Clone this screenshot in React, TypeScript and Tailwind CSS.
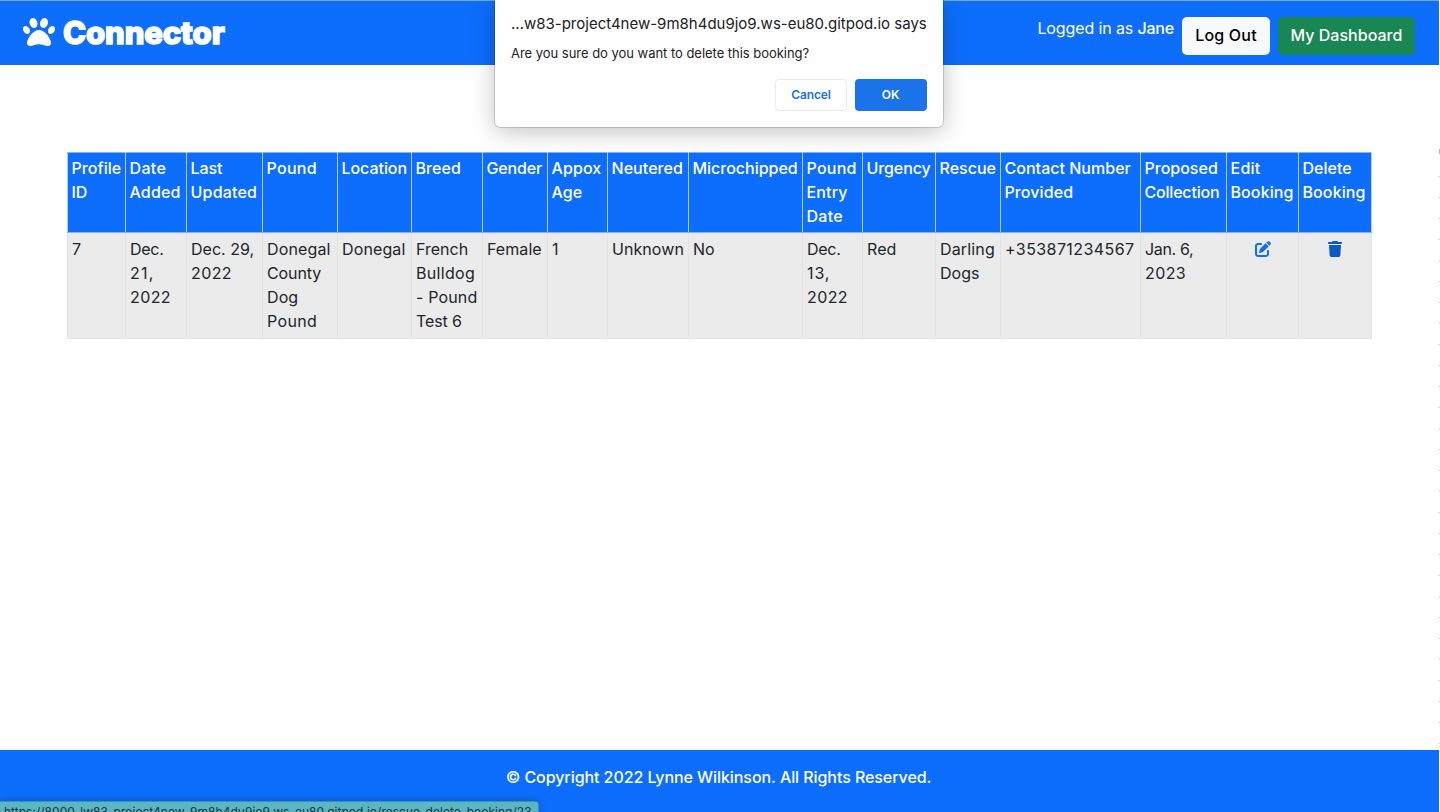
import { FaPaw, FaPenToSquare, FaTrash } from 'react-icons/fa6';

type Line = [text: string, tracking: string];
type Column = { width: string; head: Line[]; body: Line[]; icon?: 'edit' | 'delete' };

const columns: Column[] = [
  { width: 'w-[58px]', head: [['Profile', 'tracking-[0.05px]'], ['ID', '']], body: [['7', '']] },
  { width: 'w-[61px]', head: [['Date', 'tracking-[0.36px]'], ['Added', 'tracking-[0.15px]']], body: [['Dec.', 'tracking-[-0.29px]'], ['21,', 'tracking-[1.2px]'], ['2022', 'tracking-[0.42px]']] },
  { width: 'w-[76px]', head: [['Last', 'tracking-[-0.1px]'], ['Updated', 'tracking-[0.2px]']], body: [['Dec. 29,', ''], ['2022', 'tracking-[0.42px]']] },
  { width: 'w-[75px]', head: [['Pound', 'tracking-[0.3px]']], body: [['Donegal', 'tracking-[0.15px]'], ['County', 'tracking-[-0.1px]'], ['Dog', 'tracking-[0.1px]'], ['Pound', 'tracking-[0.35px]']] },
  { width: 'w-[74px]', head: [['Location', 'tracking-[-0.05px]']], body: [['Donegal', 'tracking-[0.12px]']] },
  { width: 'w-[71px]', head: [['Breed', 'tracking-[0.1px]']], body: [['French', ''], ['Bulldog', 'tracking-[0.32px]'], ['- Pound', 'tracking-[0.15px]'], ['Test 6', 'tracking-[-0.1px]']] },
  { width: 'w-[65px]', head: [['Gender', 'tracking-[-0.15px]']], body: [['Female', 'tracking-[0.06px]']] },
  { width: 'w-[60px]', head: [['Appox', 'tracking-[0.1px]'], ['Age', 'tracking-[0.1px]']], body: [['1', '']] },
  { width: 'w-[81px]', head: [['Neutered', 'tracking-[0.06px]']], body: [['Unknown', 'tracking-[0.07px]']] },
  { width: 'w-[114px]', head: [['Microchipped', 'tracking-[-0.02px]']], body: [['No', '']] },
  { width: 'w-[60px]', head: [['Pound', 'tracking-[0.25px]'], ['Entry', 'tracking-[0.15px]'], ['Date', 'tracking-[0.3px]']], body: [['Dec.', 'tracking-[-0.29px]'], ['13,', 'tracking-[0.9px]'], ['2022', 'tracking-[0.42px]']] },
  { width: 'w-[73px]', head: [['Urgency', 'tracking-[-0.1px]']], body: [['Red', 'tracking-[0.1px]']] },
  { width: 'w-[65px]', head: [['Rescue', '']], body: [['Darling', 'tracking-[0.15px]'], ['Dogs', '']] },
  { width: 'w-[140px]', head: [['Contact Number', 'tracking-[0.02px]'], ['Provided', 'tracking-[0.1px]']], body: [['+353871234567', 'tracking-[0.42px]']] },
  { width: 'w-[86px]', head: [['Proposed', ''], ['Collection', 'tracking-[-0.2px]']], body: [['Jan. 6,', 'tracking-[-0.33px]'], ['2023', 'tracking-[0.42px]']] },
  { width: 'w-[72px]', head: [['Edit', 'tracking-[0.24px]'], ['Booking', 'tracking-[0.1px]']], body: [], icon: 'edit' },
  { width: 'w-[73px]', head: [['Delete', 'tracking-[0.02px]'], ['Booking', 'tracking-[0.1px]']], body: [], icon: 'delete' },
];

function Lines({ lines }: { lines: Line[] }) {
  return (
    <>
      {lines.map(([text, tracking]) => (
        <span key={text} className={`block whitespace-nowrap ${tracking}`}>{text}</span>
      ))}
    </>
  );
}

function Dialog() {
  return (
    <div role="dialog" className="absolute left-[495px] top-0 flex h-[127px] w-[448px] flex-col rounded-b-[5px] bg-white px-4 pb-4 text-[#202124] shadow-[0_0_0_1px_rgba(0,0,0,0.15),0_4px_24px_rgba(0,0,0,0.25)]">
      <h1 className="mt-[13px] whitespace-nowrap text-[15px] leading-[21px]">…w83-project4new-9m8h4du9jo9.ws-eu80.gitpod.io says</h1>
      <p className="mt-[9px] whitespace-nowrap text-[13px] leading-5 tracking-[-0.03px]">Are you sure do you want to delete this booking?</p>
      <div className="mt-auto flex justify-end gap-2 text-xs font-semibold">
        <button className="h-8 w-[72px] rounded border border-[#e8eaed] tracking-[-0.13px] text-[#1a73e8]">Cancel</button>
        <button className="h-8 w-[72px] rounded bg-[#1a73e8] pr-px tracking-[-0.2px] text-white">OK</button>
      </div>
    </div>
  );
}

export default function App() {
  return (
    <div className="relative flex h-[812px] w-[1440px] overflow-hidden bg-white font-['Inter',sans-serif] text-base text-[#212529]">
      <div className="flex w-[1439px] flex-col">
        <header className="flex h-[65px] shrink-0 items-start justify-between border-t border-[#7fa8b4] bg-[#0d6efd] pl-[23px] pr-[24px] text-white">
          <a className="mt-[15px] flex items-start gap-[8px]">
            <FaPaw className="size-8" />
            <span className="text-[31px] font-extrabold leading-[34px] tracking-[-0.1px] [-webkit-text-stroke:1.5px_white] [stroke-linejoin:round]">Connector</span>
          </a>
          <nav className="mt-4 flex items-start gap-2 font-medium">
            <span className="-mt-px whitespace-nowrap leading-6"><span className="font-normal tracking-[-0.12px]">Logged in as </span><span className="tracking-[-0.2px]">Jane</span></span>
            <button className="h-[38px] w-[88px] rounded-[5px] bg-[#f8f9fa] pb-[2px] tracking-[0.2px] text-black">Log Out</button>
            <button className="h-[38px] w-[137px] rounded-[5px] bg-[#198754] pb-[2px] tracking-[0.02px]">My Dashboard</button>
          </nav>
        </header>

        <main className="flex-1 pl-[67px] pt-[87px]">
          <table className="w-[1304px] table-fixed border-collapse leading-6">
            <colgroup>
              {columns.map((c, i) => <col key={i} className={c.width} />)}
            </colgroup>
            <thead>
              <tr className="h-[80px] bg-[#0d6efd] text-left align-top text-white">
                {columns.map((c, i) => (
                  <th key={i} className="border border-x-[#b5cdf2] border-y-[#86b2f6] pb-[3px] pl-[3.5px] pr-0 pt-[2.5px] align-top font-medium"><Lines lines={c.head} /></th>
                ))}
              </tr>
            </thead>
            <tbody>
              <tr className="h-[106px] bg-[#ebebeb]">
                {columns.map((c, i) => (
                  <td key={i} className="border border-[#e1e3e5] border-t-[#86b2f6] pb-[3px] pl-[4px] pr-1 pt-[4px] align-top">
                    <Lines lines={c.body} />
                    {c.icon === 'edit' && <FaPenToSquare className="mx-auto mt-[4px] size-4 text-[#0d6efd]" />}
                    {c.icon === 'delete' && <FaTrash className="mx-auto mt-[4px] size-4 text-[#0a58ca]" />}
                  </td>
                ))}
              </tr>
            </tbody>
          </table>
        </main>

        <footer className="flex h-[62px] shrink-0 justify-center bg-[#0d6efd] pr-[2px] pt-[15px] font-medium leading-6 tracking-[-0.07px] text-white">
          © Copyright 2022 Lynne Wilkinson. All Rights Reserved.
        </footer>
      </div>
      <div className="mt-[149px] flex w-px flex-col">
        <div className="mb-[22px] h-[5px] shrink-0 bg-[#b5b5b5]" />
        <div className="h-[570px] bg-[repeating-linear-gradient(to_bottom,#c4c4c4_0_1px,transparent_1px_21px)]" />
      </div>

      <Dialog />

      <div className="absolute left-0 top-[801px] h-[11px] w-[539px] whitespace-nowrap rounded-tr-[4px] border-r border-t border-[#3f8fb0] bg-[#59b7c3] pl-1 pt-px text-xs leading-[18px] tracking-[0.02px] text-[#17343c] shadow-[0_0_10px_rgba(0,0,0,0.25)]">
        https://8000-lw83-project4new-9m8h4du9jo9.ws-eu80.gitpod.io/rescue_delete_booking/23
      </div>
    </div>
  );
}
